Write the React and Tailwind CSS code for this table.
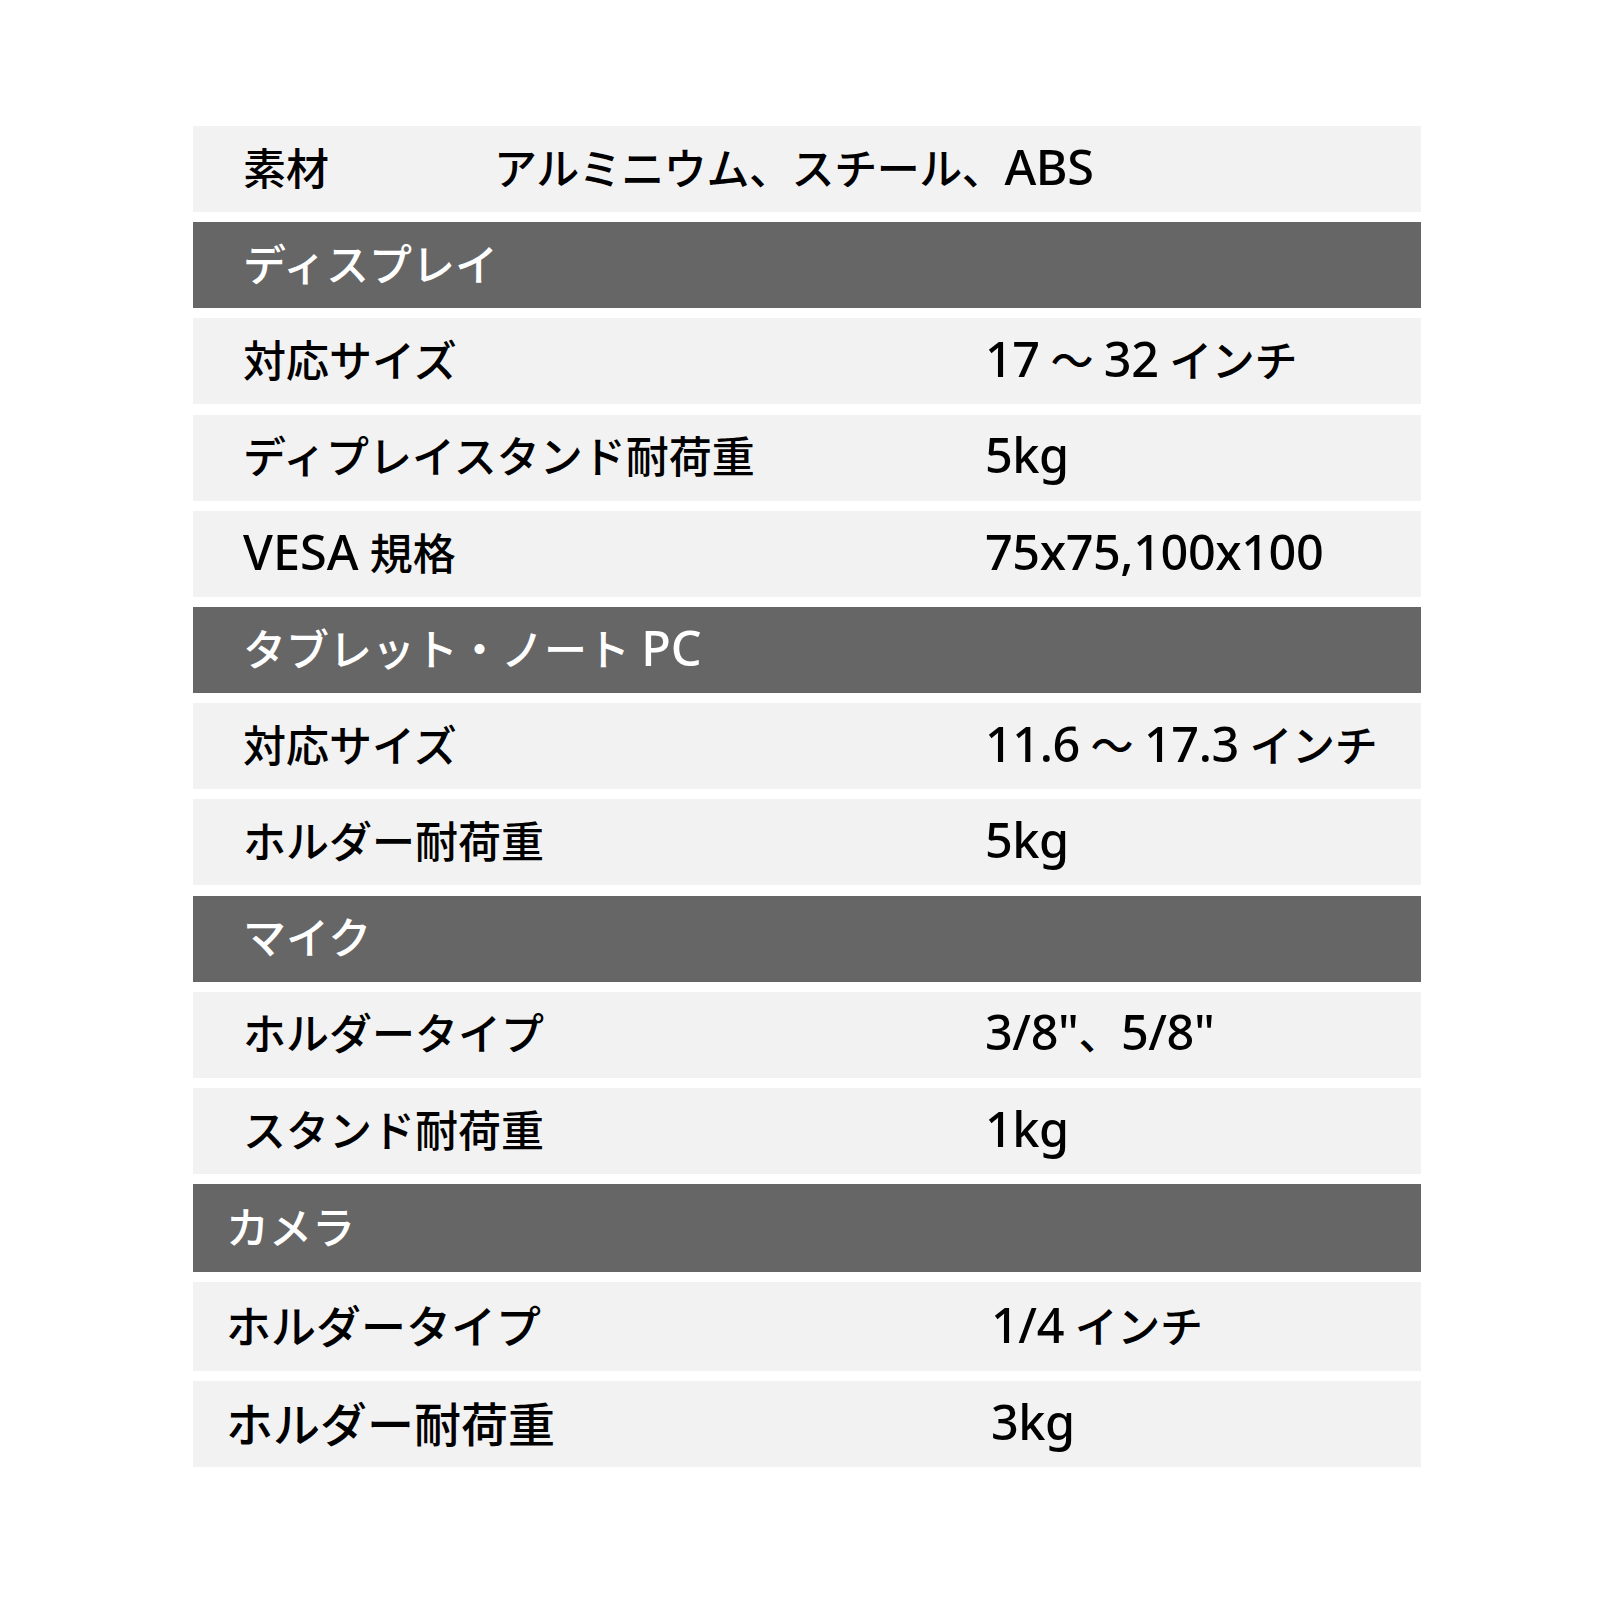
import React from "react";

const rows = [
  { type: "row", label: "素材", value: "アルミニウム、スチール、ABS", first: true, h: "h-[86px]" },
  { type: "head", label: "ディスプレイ", h: "h-[86px]" },
  { type: "row", label: "対応サイズ", value: "17 ～ 32 インチ", h: "h-[86px]" },
  { type: "row", label: "ディプレイスタンド耐荷重", value: "5kg", h: "h-[86px]" },
  { type: "row", label: "VESA 規格", value: "75x75,100x100", h: "h-[86px]" },
  { type: "head", label: "タブレット・ノート PC", h: "h-[86px]" },
  { type: "row", label: "対応サイズ", value: "11.6 ～ 17.3 インチ", h: "h-[86px]" },
  { type: "row", label: "ホルダー耐荷重", value: "5kg", h: "h-[86px]" },
  { type: "head", label: "マイク", h: "h-[86px]" },
  { type: "row", label: "ホルダータイプ", value: "3/8\"、5/8\"", h: "h-[86px]" },
  { type: "row", label: "スタンド耐荷重", value: "1kg", h: "h-[86px]" },
  { type: "head", label: "カメラ", h: "h-[88px]", cam: true },
  { type: "row", label: "ホルダータイプ", value: "1/4 インチ", h: "h-[89px]", cam: true, size: "text-[45px]" },
  { type: "row", label: "ホルダー耐荷重", value: "3kg", h: "h-[86px]", cam: true, size: "text-[47px]" },
];

// latin runs are set a bit larger than the kana/kanji, like the original font
function Txt({ children }) {
  const parts = children.split(/([!-~]+)/);
  return parts.map((p, i) =>
    /^[!-~]+$/.test(p) ? (
      <span key={i} className="text-[1.13em] leading-none">{p}</span>
    ) : (
      <span key={i}>{p}</span>
    )
  );
}

function App() {
  return (
    <div
      className="w-[1600px] h-[1600px] bg-white pt-[126px] pl-[193px]"
      style={{ fontFamily: '"Noto Sans", "Noto Sans CJK JP", sans-serif' }}
    >
      <div className="w-[1228px] flex flex-col gap-[10.2px]">
        {rows.map((r, i) =>
          r.type === "head" ? (
            <div
              key={i}
              className={`${r.h} bg-[#666666] flex items-center text-white font-medium text-[43px] ${r.cam ? "pl-[33px]" : "pl-[50px]"}`}
            >
              <div><Txt>{r.label}</Txt></div>
            </div>
          ) : (
            <div
              key={i}
              className={`${r.h} bg-[#f2f2f2] flex items-center text-black font-medium ${r.cam ? "pl-[33px]" : "pl-[50px]"}`}
            >
              <div className={`${r.first ? "w-[251px]" : r.cam ? "w-[765px]" : "w-[742px]"} shrink-0 ${r.size || "text-[43px]"}`}>
                <Txt>{r.label}</Txt>
              </div>
              <div className="text-[43px] tracking-[-0.01em]">
                <Txt>{r.value}</Txt>
              </div>
            </div>
          )
        )}
      </div>
    </div>
  );
}

export default App;
